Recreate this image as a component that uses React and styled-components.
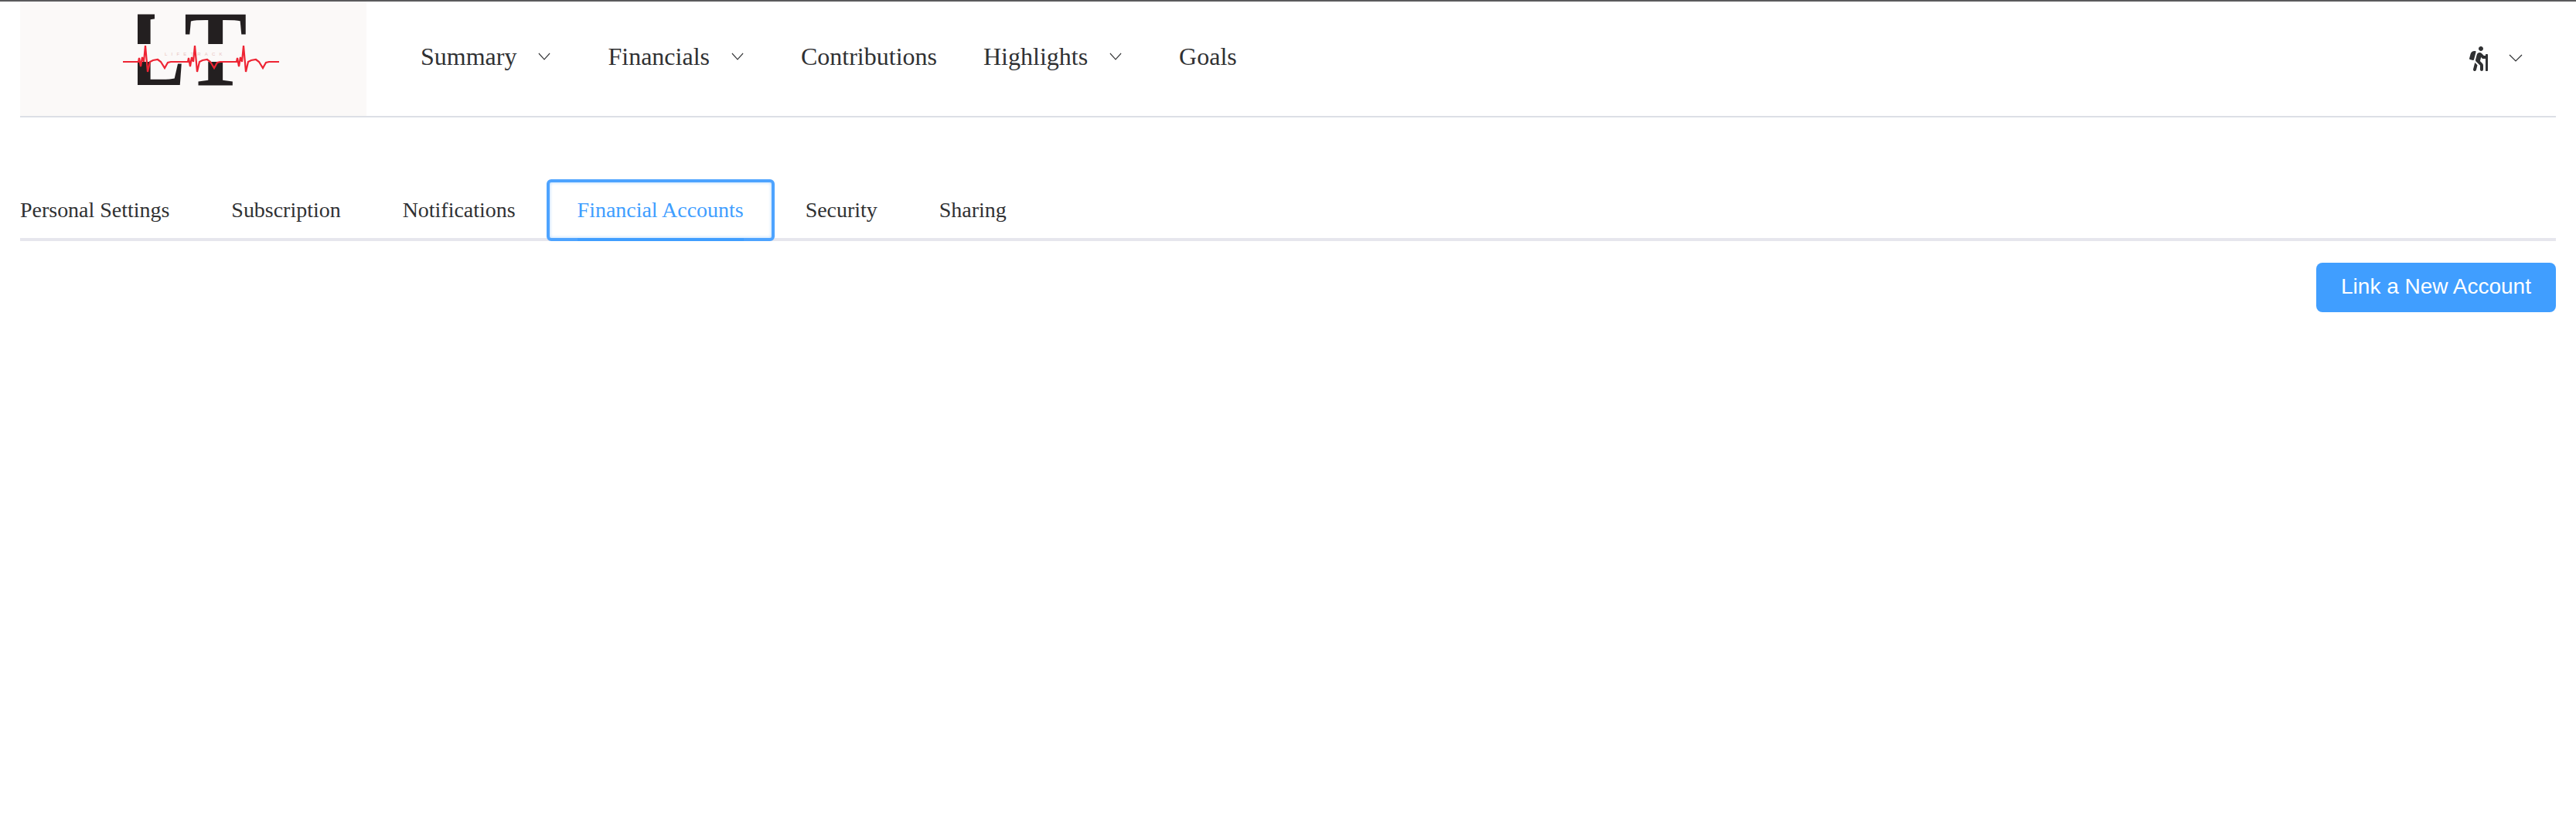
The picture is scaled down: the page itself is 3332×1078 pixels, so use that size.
import React from 'react';
import styled, { createGlobalStyle } from 'styled-components';
import { FaHiking } from 'react-icons/fa';

const GlobalStyle = createGlobalStyle`
  body {
    margin: 0;
    background: #fff;
    font-family: "Liberation Serif", "Times New Roman", serif;
    color: #303133;
  }
`

const Page = styled.div`
  min-height: 1078px;
  box-sizing: border-box;
  border-top: 2px solid #5a5a5c;
  padding: 0 26px;
`

const Header = styled.header`
  display: flex;
  align-items: center;
  height: 150px;
  box-sizing: border-box;
  border-bottom: 2px solid #dcdfe6;
`

const LogoBox = styled.div`
  width: 448px;
  height: 148px;
  background: #fbf9f8;
  flex-shrink: 0;
`

const LogoSvg = styled.svg`
  display: block;
  overflow: visible;
  filter: blur(0.5px);
`

const Nav = styled.nav`
  display: flex;
  align-items: center;
  margin-left: 40px;
  padding-bottom: 6px;
  flex: 1;
`

const NavItem = styled.div`
  display: flex;
  align-items: center;
  padding: 0 30px;
  font-size: 32px;
  color: #303133;
  white-space: nowrap;
`

const Chevron = styled.svg`
  display: block;
  width: ${props => props.size}px;
  height: 10px;
  margin-left: 28px;
  margin-right: 14px;
`

const UserMenu = styled.div`
  display: flex;
  align-items: center;
  padding-right: 43px;
  color: #303133;
`

const UserChevron = styled(Chevron)`
  margin: -2px 0 0 23px;
`

const TabBar = styled.div`
  display: flex;
  height: 80px;
  box-sizing: border-box;
  margin-top: 80px;
  border-bottom: 4px solid #e6e6ed;
`

const Tab = styled.div`
  position: relative;
  display: flex;
  align-items: center;
  height: 80px;
  box-sizing: border-box;
  padding: 0 ${props => (props.$active ? 36 : 40)}px;
  font-size: 28px;
  letter-spacing: -0.02px;
  white-space: nowrap;
  color: ${props => (props.$active ? '#409eff' : '#303133')};
  ${props => props.$active && `
    border: 4px solid #4da3ff;
    border-radius: 6px;
    box-shadow: inset 0 0 4px #a9d3ff;
    background: #fff;
  `}
  &:first-child {
    padding-left: 0;
  }
`

const InkBar = styled.span`
  position: absolute;
  left: 36px;
  right: 36px;
  bottom: -4px;
  height: 4px;
  background: #409eff;
`

const Actions = styled.div`
  display: flex;
  justify-content: flex-end;
  margin-top: 28px;
`

const LinkButton = styled.button`
  width: 310px;
  height: 64px;
  border: 0;
  border-radius: 8px;
  background: #409eff;
  color: #fff;
  font-family: "Liberation Sans", Arial, sans-serif;
  font-size: 28px;
  padding: 0 0 2px;
`

const beat = peak => [
  [peak - 12, 78], [peak - 9, 78], [peak - 8, 73], [peak - 6, 84], [peak - 4, 72],
  [peak - 2, 78], [peak, 57], [peak + 3, 91], [peak + 6, 78], [peak + 10, 76],
  [peak + 16, 75], [peak + 20, 78], [peak + 25, 86], [peak + 29, 79], [peak + 33, 78],
]

const ecgPoints = [[133, 78], ...beat(162), ...beat(226), ...beat(289), [335, 78]]
  .map(p => p.join(',')).join(' ')

const Logo = () => (
  <LogoSvg width="448" height="148" viewBox="0 0 448 148">
    <g fontFamily="Liberation Serif, serif" fontWeight="700" fontSize="139" fill="#231f20">
      <text transform="translate(141 108) scale(0.78 1)">L</text>
      <text transform="translate(212 108) scale(0.88 1)">T</text>
    </g>
    {/* the logo's L has a plain stem, so the serifs are masked away */}
    <rect x="130" y="10" width="22" height="100" fill="#fbf9f8" />
    <rect x="174" y="10" width="30" height="46" fill="#fbf9f8" />
    <rect x="130" y="55" width="210" height="23" fill="#fbf9f8" />
    <text x="187" y="70" fontFamily="Liberation Sans, sans-serif" fontSize="6" letterSpacing="5.2" fill="#e8c4c0">LIFETRACK</text>
    <polyline points={ecgPoints} fill="none" stroke="#ee2433" strokeWidth="2.2" />
  </LogoSvg>
)

const ChevronIcon = ({ as: Comp = Chevron }) => (
  <Comp size={Comp === Chevron ? 16 : 18} viewBox="0 0 18 10" preserveAspectRatio="none">
    <path d="M1 1l8 8 8-8" fill="none" stroke="#303133" strokeWidth="1.2" />
  </Comp>
)

const navItems = [
  { label: 'Summary', arrow: true },
  { label: 'Financials', arrow: true },
  { label: 'Contributions' },
  { label: 'Highlights', arrow: true },
  { label: 'Goals' },
]

const tabs = ['Personal Settings', 'Subscription', 'Notifications', 'Financial Accounts', 'Security', 'Sharing']

const App = () => {
  return (
    <Page>
      <GlobalStyle />
      <Header>
        <LogoBox>
          <Logo />
        </LogoBox>
        <Nav>
          {navItems.map(item => (
            <NavItem key={item.label}>
              {item.label}
              {item.arrow && <ChevronIcon />}
            </NavItem>
          ))}
        </Nav>
        <UserMenu>
          <FaHiking size={32} />
          <ChevronIcon as={UserChevron} />
        </UserMenu>
      </Header>
      <TabBar>
        {tabs.map(tab => (
          <Tab key={tab} $active={tab === 'Financial Accounts'}>
            {tab}
            {tab === 'Financial Accounts' && <InkBar />}
          </Tab>
        ))}
      </TabBar>
      <Actions>
        <LinkButton>Link a New Account</LinkButton>
      </Actions>
    </Page>
  )
}

export default App;
